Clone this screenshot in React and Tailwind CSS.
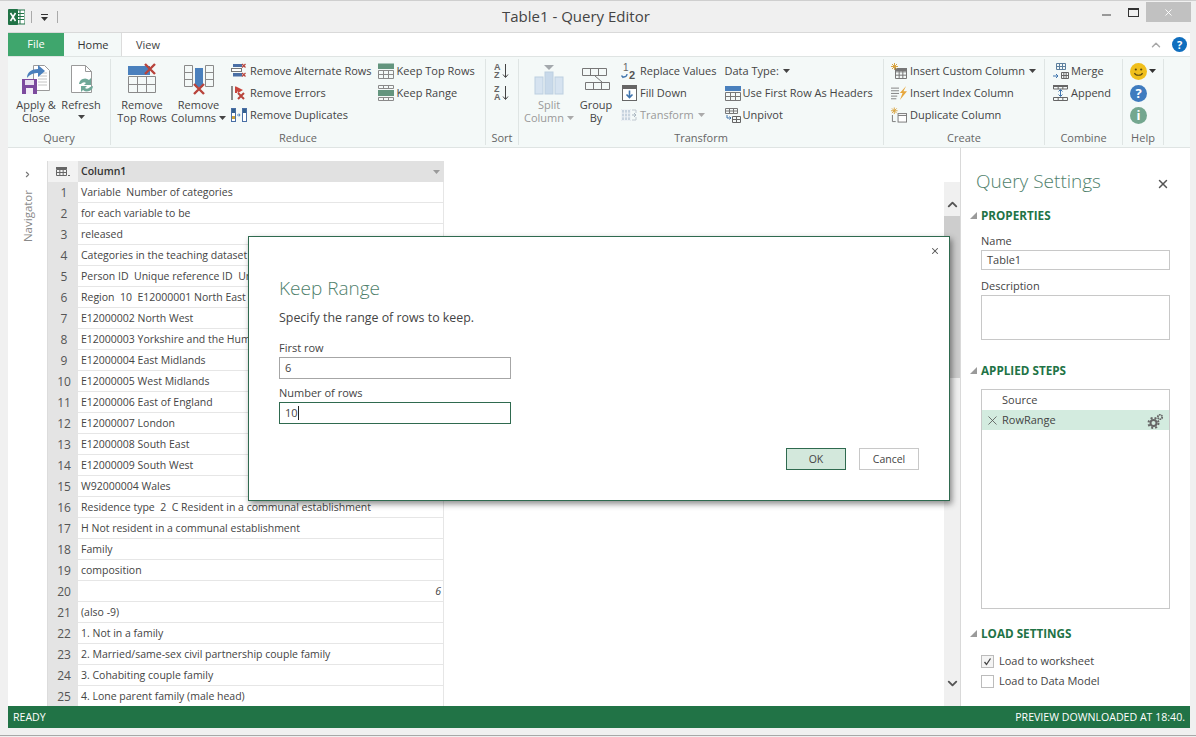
import { ChevronUp, ChevronDown, ChevronRight, X } from "lucide-react";

const rows = [
  "Variable  Number of categories",
  "for each variable to be",
  "released",
  "Categories in the teaching dataset",
  "Person ID  Unique reference ID  Unique",
  "Region  10  E12000001 North East",
  "E12000002 North West",
  "E12000003 Yorkshire and the Humber",
  "E12000004 East Midlands",
  "E12000005 West Midlands",
  "E12000006 East of England",
  "E12000007 London",
  "E12000008 South East",
  "E12000009 South West",
  "W92000004 Wales",
  "Residence type  2  C Resident in a communal establishment",
  "H Not resident in a communal establishment",
  "Family",
  "composition",
  "",
  "(also -9)",
  "1. Not in a family",
  "2. Married/same-sex civil partnership couple family",
  "3. Cohabiting couple family",
  "4. Lone parent family (male head)",
];

const Caret = ({ color = "#333" }) => (
  <svg width="7" height="4" viewBox="0 0 7 4" className="shrink-0">
    <path d="M0 0h7L3.5 4z" fill={color} />
  </svg>
);

const Grid = ({ x, y, cols, rows: r, w, h, stroke = "#8a8a8a" }) => {
  const lines = [];
  for (let i = 0; i <= cols; i++) lines.push(`M${x + (i * w) / cols} ${y}v${h}`);
  for (let i = 0; i <= r; i++) lines.push(`M${x} ${y + (i * h) / r}h${w}`);
  return <path d={lines.join("")} stroke={stroke} fill="none" strokeWidth="1" />;
};

const RedX = ({ x, y, s = 5, w = 1.6 }) => (
  <path d={`M${x} ${y}l${s} ${s}M${x + s} ${y}l${-s} ${s}`} stroke="#b8443c" strokeWidth={w} fill="none" />
);

const ApplyIcon = () => (
  <svg width="30" height="32" viewBox="0 0 30 32">
    <path d="M12.5 2.5h11l5 5v20h-16z" fill="#fff" stroke="#9a9a9a" />
    <path d="M17 10h9M17 13h9M17 16h9M17 19h9M17 22h9" stroke="#c4c4c4" />
    <path d="M6 15c0-6 5-9 11-9V2l7 6-7 6v-4c-4 0-8 1-11 5z" fill="#4a80bd" />
    <rect x="1" y="16" width="15" height="15" fill="#7c4a9e" />
    <rect x="4" y="17" width="9" height="5" fill="#e8e0ef" />
    <rect x="5" y="25" width="7" height="6" fill="#f3eef7" />
  </svg>
);

const RefreshIcon = () => (
  <svg width="30" height="32" viewBox="0 0 30 32">
    <path d="M5.5 2.5h14l6 6v21h-20z" fill="#fff" stroke="#9a9a9a" />
    <path d="M19.5 2.5v6h6" fill="none" stroke="#9a9a9a" />
    <path d="M13 21a6 6 0 0 1 10-4l2-2v7h-7l2-2a3.500 3.500 0 0 0-5 1z" fill="#6fa898" />
    <path d="M27 23a6 6 0 0 1-10 4l-2 2v-6h6l-2 2a3.500 3.500 0 0 0 5-1z" fill="#6fa898" />
  </svg>
);

const RemoveRowsIcon = () => (
  <svg width="30" height="32" viewBox="0 0 30 32">
    <rect x="1" y="3" width="22" height="9" fill="#4a80bd" />
    <Grid x={1.500} y={13.500} cols={3} rows={2} w={27} h={16} />
    <RedX x={18} y={1} s={10} w={2.4} />
  </svg>
);

const RemoveColsIcon = () => (
  <svg width="32" height="32" viewBox="0 0 32 32">
    <Grid x={1.500} y={2.500} cols={1} rows={3} w={8} h={21} />
    <Grid x={22.500} y={2.500} cols={1} rows={3} w={8} h={21} />
    <rect x="12" y="5" width="8" height="19" fill="#4a80bd" />
    <RedX x={11} y={21} s={10} w={2.4} />
  </svg>
);

const SplitIcon = () => (
  <svg width="30" height="30" viewBox="0 0 30 30">
    <path d="M10 0h10l-5 5z" fill="#a4a9ad" />
    <rect x="1" y="12" width="8" height="17" fill="#d6e3f0" stroke="#bccfe0" />
    <rect x="11" y="7" width="8" height="22" fill="#c8d9ea" stroke="#bccfe0" />
    <rect x="21" y="12" width="8" height="17" fill="#d6e3f0" stroke="#bccfe0" />
  </svg>
);

const GroupByIcon = () => (
  <svg width="30" height="30" viewBox="0 0 30 30">
    <Grid x={1.500} y={3.500} cols={3} rows={1} w={24} h={7} stroke="#777" />
    <Grid x={4.500} y={17.500} cols={3} rows={1} w={24} h={7} stroke="#777" />
    <path d="M14 11l7 6" stroke="#777" />
  </svg>
);

const AltRowsIcon = () => (
  <svg width="16" height="16" viewBox="0 0 16 16">
    <rect x="2" y="1" width="9" height="3" fill="#4a6fa5" />
    <rect x="0.500" y="5.500" width="10" height="3" fill="#fff" stroke="#777" />
    <rect x="2" y="10" width="9" height="3.500" fill="#4a6fa5" />
    <RedX x={11} y={1} s={3.500} w={1.200} />
    <RedX x={11} y={10} s={3.500} w={1.200} />
  </svg>
);

const ErrorsIcon = () => (
  <svg width="16" height="16" viewBox="0 0 16 16">
    <path d="M1 1v14" stroke="#666" strokeWidth="1.500" />
    <path d="M4 1l8 4-5 3z" fill="#c8453c" />
    <path d="M5 2v6" stroke="#c8453c" strokeWidth="2" />
    <RedX x={7} y={8} s={6} w={2} />
  </svg>
);

const DupIcon = () => (
  <svg width="16" height="16" viewBox="0 0 16 16">
    <rect x="0.500" y="1.500" width="4" height="13" fill="#fff" stroke="#4a6fa5" />
    <rect x="1" y="2" width="3" height="4" fill="#34618f" />
    <rect x="1" y="9" width="3" height="3" fill="#c8a03c" />
    <rect x="11.500" y="1.500" width="4" height="13" fill="#fff" stroke="#4a6fa5" />
    <rect x="12" y="2" width="3" height="4" fill="#34618f" />
    <path d="M6 8h3l-1-1.500M9 8l-1 1.500" stroke="#4a80bd" fill="none" />
  </svg>
);

const KeepTopIcon = () => (
  <svg width="16" height="16" viewBox="0 0 16 16">
    <rect x="0" y="0.500" width="16" height="5.500" fill="#63957e" />
    <Grid x={0.500} y={7.500} cols={3} rows={2} w={15} h={8} stroke="#8a8a8a" />
  </svg>
);

const KeepRangeIcon = () => (
  <svg width="16" height="16" viewBox="0 0 16 16">
    <Grid x={0.500} y={0.500} cols={3} rows={1} w={15} h={3} stroke="#8a8a8a" />
    <rect x="0" y="5" width="16" height="6" fill="#63957e" />
    <Grid x={0.500} y={12.500} cols={3} rows={1} w={15} h={3} stroke="#8a8a8a" />
  </svg>
);

const SortIcon = ({ top, bottom }) => (
  <svg width="16" height="18" viewBox="0 0 16 18">
    <text x="0" y="8" fontSize="9" fontWeight="700" fill="#666" fontFamily="Liberation Sans, sans-serif">{top}</text>
    <text x="0" y="16" fontSize="9" fontWeight="700" fill="#666" fontFamily="Liberation Sans, sans-serif">{bottom}</text>
    <path d="M11.500 2v13M9 12.500l2.500 3 2.500-3" stroke="#444" fill="none" />
  </svg>
);

const ReplaceIcon = () => (
  <svg width="16" height="18" viewBox="0 0 16 18">
    <text x="2" y="9" fontSize="10" fill="#666" fontFamily="Liberation Sans, sans-serif">1</text>
    <text x="8" y="17" fontSize="11" fontWeight="700" fill="#555" fontFamily="Liberation Sans, sans-serif">2</text>
    <path d="M6 12c0 2-2 3-4 3M0.500 13.500L2 15.500l2-1" stroke="#3f74ad" fill="none" strokeWidth="1.300" />
  </svg>
);

const FillDownIcon = () => (
  <svg width="15" height="16" viewBox="0 0 15 16">
    <rect x="0.500" y="0.500" width="14" height="15" fill="#fff" stroke="#666" />
    <rect x="0" y="0" width="15" height="4" fill="#666" />
    <path d="M7.500 5.500v7M4.500 9.500l3 3 3-3" stroke="#3f74ad" strokeWidth="1.600" fill="none" />
  </svg>
);

const TransformIcon = () => (
  <svg width="16" height="14" viewBox="0 0 16 14">
    <rect x="0" y="1" width="10" height="12" fill="#c7d3de" />
    <Grid x={0.500} y={1.500} cols={3} rows={3} w={9} h={11} stroke="#eef2f5" />
    <path d="M11 7h3M13 5l2 2-2 2" stroke="#a9b5bf" fill="none" />
    <path d="M11 2h4v3M11 12h4V9" stroke="#c0c8cf" fill="none" />
  </svg>
);

const FirstRowIcon = () => (
  <svg width="16" height="15" viewBox="0 0 16 15">
    <rect x="0" y="0" width="16" height="5" fill="#4a80bd" />
    <Grid x={0.500} y={6.500} cols={3} rows={2} w={15} h={8} stroke="#777" />
  </svg>
);

const UnpivotIcon = () => (
  <svg width="16" height="15" viewBox="0 0 16 15">
    <Grid x={0.500} y={0.500} cols={3} rows={2} w={12} h={5} stroke="#777" />
    <Grid x={7.500} y={8.500} cols={2} rows={2} w={8} h={6} stroke="#666" />
    <path d="M2 7v3h4M4.500 8.500L6 10l-1.500 1.500" stroke="#3f74ad" fill="none" />
  </svg>
);

const CustomColIcon = () => (
  <svg width="16" height="16" viewBox="0 0 16 16">
    <Grid x={4.500} y={5.500} cols={3} rows={3} w={11} h={10} stroke="#777" />
    <rect x="4" y="5" width="12" height="3" fill="#777" />
    <path d="M3.500 0v7M0 3.500h7M1 1l5 5M6 1L1 6" stroke="#d9a441" />
  </svg>
);

const IndexColIcon = () => (
  <svg width="18" height="16" viewBox="0 0 18 16">
    <path d="M0 2.500h9M0 5.500h9M0 8.500h9M0 11.500h7M0 14.500h6" stroke="#777" />
    <path d="M17 0l-7 8h3l-3 8 8-10h-4z" fill="#e7a73c" />
  </svg>
);

const DupColIcon = () => (
  <svg width="17" height="16" viewBox="0 0 17 16">
    <path d="M3.500 0v7M0 3.500h7M1 1l5 5M6 1L1 6" stroke="#d9a441" />
    <path d="M1.500 8v7H5" stroke="#777" fill="none" />
    <rect x="7.500" y="6.500" width="9" height="9" fill="#fff" stroke="#777" />
    <path d="M7.500 8.500h9" stroke="#777" />
  </svg>
);

const MergeIcon = () => (
  <svg width="16" height="16" viewBox="0 0 16 16">
    <Grid x={3.500} y={0.500} cols={3} rows={2} w={9} h={6} stroke="#5d7f9e" />
    <Grid x={8.500} y={9.500} cols={3} rows={2} w={7} h={6} stroke="#666" />
    <path d="M0 13h5M3 11l2 2-2 2" stroke="#3f74ad" fill="none" />
  </svg>
);

const AppendIcon = () => (
  <svg width="16" height="16" viewBox="0 0 16 16">
    <Grid x={0.500} y={0.500} cols={3} rows={1} w={14} h={3.500} stroke="#666" />
    <path d="M0 1h15" stroke="#666" strokeWidth="2" />
    <path d="M7.500 5v6M5.500 6.500l2-2 2 2M5.500 9.500l2 2 2-2" stroke="#3f74ad" fill="none" />
    <Grid x={0.500} y={12.500} cols={3} rows={1} w={14} h={3} stroke="#666" />
  </svg>
);

const Smiley = () => (
  <svg width="17" height="17" viewBox="0 0 17 17">
    <circle cx="8.500" cy="8.500" r="8.500" fill="#f0bf1c" />
    <circle cx="5.800" cy="6.500" r="1.100" fill="#5b4a12" />
    <circle cx="11.200" cy="6.500" r="1.100" fill="#5b4a12" />
    <path d="M4.500 10c1 3 7 3 8 0" stroke="#5b4a12" fill="none" strokeWidth="1.100" />
  </svg>
);

const Round = ({ color, size = 16, children }) => (
  <div
    className="flex items-center justify-center rounded-full text-white font-bold leading-none"
    style={{ background: color, width: size, height: size, fontSize: size - 4 }}
  >
    {children}
  </div>
);

const LargeBtn = ({ icon, lines, width, disabled, caret, caretBelow }) => (
  <div className="flex flex-col items-center" style={{ width }}>
    <div className="flex h-[35px] items-end justify-center">{icon}</div>
    <div className={`mt-[3px] text-center leading-[13px] ${disabled ? "text-[#9a9a9a]" : "text-[#444]"}`}>
      {lines.map((l, i) => (
        <div key={i} className="flex items-center justify-center gap-[3px] whitespace-nowrap">
          {l}
          {caret && i === lines.length - 1 && <Caret color={disabled ? "#aaa" : "#444"} />}
        </div>
      ))}
      {caretBelow && (
        <div className="flex justify-center pt-[4px]">
          <Caret color="#444" />
        </div>
      )}
    </div>
  </div>
);

const SmallBtn = ({ icon, label, disabled, caret, gap = "gap-[3px]" }) => (
  <div className={`flex h-[22px] items-center whitespace-nowrap ${gap} ${disabled ? "text-[#9a9a9a]" : "text-[#444]"}`}>
    {icon && <div className="flex w-[16px] shrink-0 items-center justify-center">{icon}</div>}
    <span>{label}</span>
    {caret && <span className="ml-[1px]"><Caret color={disabled ? "#aaa" : "#444"} /></span>}
  </div>
);

const Group = ({ label, width, children }) => (
  <div className="flex h-full shrink-0 flex-col border-r border-[#dfe5e4]" style={{ width }}>
    <div className="flex min-h-0 flex-1 items-start">{children}</div>
    <div className="h-[15px] text-center leading-[15px] text-[#666]">{label}</div>
  </div>
);

const Section = ({ title, className = "" }) => (
  <div className={`flex items-center gap-[4px] pl-[9px] ${className}`}>
    <svg width="7" height="7" viewBox="0 0 7 7" className="shrink-0">
      <path d="M7 0v7H0z" fill="#9a9a9a" />
    </svg>
    <span className="text-[11.7px] font-bold leading-[16px] text-[#217346]">{title}</span>
  </div>
);

export default function App() {
  return (
    <div className="relative flex h-[737px] w-[1196px] flex-col overflow-hidden border-t border-[#cfcfcf] bg-[#f0f0f0] text-[11px] text-[#444] font-['Open_Sans','Noto_Sans',sans-serif]">
      {/* title bar */}
      <div className="relative flex h-[31px] shrink-0 items-center pl-[8px]">
        <svg width="17" height="16" viewBox="0 0 17 16" className="shrink-0">
          <rect x="7" y="1" width="10" height="14" fill="#fff" stroke="#217346" />
          <path d="M8 4.500h8M8 7.500h8M8 10.500h8M12 1v14" stroke="#217346" />
          <rect x="0" y="0" width="10" height="16" rx="1" fill="#217346" />
          <path d="M2.500 4l5 8M7.500 4l-5 8" stroke="#fff" strokeWidth="1.600" />
        </svg>
        <div className="ml-[6px] h-[12px] w-px bg-[#aaa]" />
        <div className="ml-[9px] flex flex-col items-center gap-[2px] pt-[2px]">
          <div className="h-px w-[7px] bg-[#333]" />
          <Caret color="#333" />
        </div>
        <div className="ml-[9px] h-[12px] w-px bg-[#aaa]" />
        <div className="absolute left-[502px] top-[4px] text-[15px] leading-[22px] text-[#444]">Table1 - Query Editor</div>
        <div className="ml-auto mr-[5px] flex items-start self-start">
          <div className="mt-[13px] h-[2px] w-[9px] bg-[#999]" />
          <div className="ml-[17px] mt-[7px] h-[9px] w-[11px] border border-t-2 border-[#333]" />
          <div className="ml-[7px] mt-[1px] flex h-[20px] w-[45px] items-center justify-center bg-[#c1c1c1]">
            <X size={11} strokeWidth={2} color="#fff" />
          </div>
        </div>
      </div>

      <div className="ml-[8px] mr-[6px] flex min-h-0 flex-1 flex-col">
        {/* tabs */}
        <div className="flex h-[24px] shrink-0 items-stretch border-t border-[#d9d9d9] bg-white">
          <div className="flex w-[56px] items-center justify-center bg-[#3fa66d] text-white">File</div>
          <div className="-mb-px flex w-[58px] items-center justify-center border-r border-[#dcdcdc] bg-[#f4f9f8] pl-[1px] pt-[1px] text-[#333]">Home</div>
          <div className="ml-[14px] flex items-center pt-[1px] text-[#444]">View</div>
          <div className="ml-auto mr-[3px] flex items-center gap-[9px]">
            <ChevronUp size={14} strokeWidth={2.500} color="#a8a8a8" />
            <Round color="#106ebe" size={15}>?</Round>
          </div>
        </div>

        {/* ribbon */}
        <div className="flex h-[92px] shrink-0 items-stretch border-y border-[#dfe4e3] bg-[#f4f9f8] pb-[2px] pt-[2px]">
          <Group label="Query" width={103}>
            <div className="flex pl-[2px] pt-[1px]">
              <LargeBtn width={52} icon={<ApplyIcon />} lines={["Apply &", "Close"]} />
              <LargeBtn width={38} icon={<RefreshIcon />} lines={["Refresh"]} caretBelow />
            </div>
          </Group>
          <Group label="Reduce" width={375}>
            <div className="flex pl-[2px] pt-[1px]">
              <LargeBtn width={58} icon={<RemoveRowsIcon />} lines={["Remove", "Top Rows"]} />
              <LargeBtn width={55} icon={<RemoveColsIcon />} lines={["Remove", "Columns"]} caret />
              <div className="ml-[5px] flex flex-col">
                <SmallBtn icon={<AltRowsIcon />} label="Remove Alternate Rows" />
                <SmallBtn icon={<ErrorsIcon />} label="Remove Errors" />
                <SmallBtn icon={<DupIcon />} label="Remove Duplicates" />
              </div>
              <div className="ml-[6px] flex flex-col">
                <SmallBtn icon={<KeepTopIcon />} label="Keep Top Rows" />
                <SmallBtn icon={<KeepRangeIcon />} label="Keep Range" />
              </div>
            </div>
          </Group>
          <Group label="Sort" width={33}>
            <div className="flex flex-col items-center gap-[4px] pl-[8px] pt-[3px]">
              <SortIcon top="A" bottom="Z" />
              <SortIcon top="Z" bottom="A" />
            </div>
          </Group>
          <Group label="Transform" width={365}>
            <div className="flex pt-[1px]">
              <LargeBtn width={60} disabled icon={<SplitIcon />} lines={["Split", "Column"]} caret />
              <LargeBtn width={34} icon={<GroupByIcon />} lines={["Group", "By"]} />
              <div className="ml-[8px] flex flex-col">
                <SmallBtn icon={<ReplaceIcon />} label="Replace Values" />
                <SmallBtn icon={<FillDownIcon />} label="Fill Down" />
                <SmallBtn icon={<TransformIcon />} label="Transform" disabled caret />
              </div>
              <div className="ml-[8px] flex flex-col">
                <SmallBtn label="Data Type:" caret />
                <SmallBtn icon={<FirstRowIcon />} label="Use First Row As Headers" gap="gap-[2px]" />
                <SmallBtn icon={<UnpivotIcon />} label="Unpivot" gap="gap-[2px]" />
              </div>
            </div>
          </Group>
          <Group label="Create" width={161}>
            <div className="flex flex-col pl-[7px] pt-[1px]">
              <SmallBtn icon={<CustomColIcon />} label="Insert Custom Column" caret />
              <SmallBtn icon={<IndexColIcon />} label="Insert Index Column" />
              <SmallBtn icon={<DupColIcon />} label="Duplicate Column" />
            </div>
          </Group>
          <Group label="Combine" width={78}>
            <div className="flex flex-col pl-[8px] pt-[1px]">
              <SmallBtn icon={<MergeIcon />} label="Merge" gap="gap-[2px]" />
              <SmallBtn icon={<AppendIcon />} label="Append" gap="gap-[2px]" />
            </div>
          </Group>
          <Group label="Help" width={41}>
            <div className="flex flex-col pl-[7px] pt-[1px]">
              <div className="flex h-[22px] items-center gap-[2px]">
                <Smiley />
                <Caret color="#333" />
              </div>
              <div className="flex h-[22px] items-center"><Round color="#3f7cbf" size={17}>?</Round></div>
              <div className="flex h-[22px] items-center"><Round color="#74a78f" size={17}>i</Round></div>
            </div>
          </Group>
        </div>

        {/* main area */}
        <div className="flex min-h-0 flex-1 bg-white">
          <div className="flex w-[39px] shrink-0 flex-col items-center pt-[22px] text-[#8a8a8a]">
            <ChevronRight size={9} strokeWidth={3} color="#777" />
            <div className="mt-[11px] rotate-180 text-[11.5px] leading-none [writing-mode:vertical-rl]">Navigator</div>
          </div>

          <div className="w-[397px] shrink-0 overflow-hidden pt-[13px] text-[10.5px]">
            <div className="flex h-[21px] border-l border-[#dcdcdc]">
              <div className="flex w-[30px] shrink-0 items-center justify-center gap-[1px] bg-[#f2f2f2]">
                <svg width="11" height="9" viewBox="0 0 11 9">
                  <path d="M0 0h11v2H0z" fill="#666" />
                  <Grid x={0.500} y={2.500} cols={3} rows={2} w={10} h={6} stroke="#666" />
                </svg>
                <div className="mt-[7px] h-px w-[2px] bg-[#666]" />
              </div>
              <div className="flex flex-1 items-center justify-between bg-[#e1e1e1] pl-[3px] pr-[4px] font-semibold text-[#333]">
                Column1
                <Caret color="#9a9a9a" />
              </div>
            </div>
            {rows.map((text, i) => (
              <div key={i} className="flex h-[21px] border-l border-[#dcdcdc]">
                <div className="flex w-[30px] shrink-0 items-center justify-center bg-[#e4e4e4] pl-[2px] text-[12px] text-[#555]">{i + 1}</div>
                <div className="flex flex-1 items-center justify-between whitespace-pre border-b border-r border-[#e6e6e6] pl-[3px] pr-[2px] pt-[1px] text-[#444]">
                  {text}
                  {i === 19 && <span className="ml-auto italic">6</span>}
                </div>
              </div>
            ))}
          </div>

          <div className="flex-1" />

          {/* scroll bar */}
          <div className="mt-[34px] flex w-[16px] shrink-0 flex-col items-center justify-between bg-[#f0f0f0]">
            <div className="flex w-full flex-col items-center">
              <div className="flex h-[34px] items-end pb-[4px]"><ChevronUp size={15} strokeWidth={3} color="#555" /></div>
              <div className="h-[162px] w-full bg-[#cdcdcd]" />
            </div>
            <ChevronDown size={15} strokeWidth={3} color="#555" className="mb-[15px]" />
          </div>

          {/* query settings */}
          <div className="w-[230px] shrink-0 border-l border-[#d9d9d9]">
            <div className="flex h-[46px] items-end justify-between pl-[15px] pr-[20px]">
              <span className="text-[19px] font-light leading-[26px] text-[#4f7f6c]">Query Settings</span>
              <X size={14} strokeWidth={2.500} color="#555" className="mb-[3px]" />
            </div>
            <Section title="PROPERTIES" className="mt-[13px]" />
            <div className="px-[20px]">
              <div className="mt-[10px] leading-[15px]">Name</div>
              <div className="mt-[2px] flex h-[20px] items-center border border-[#c8c8c8] pl-[5px] pt-[1px]">Table1</div>
              <div className="mt-[8px] leading-[15px]">Description</div>
              <div className="mt-[2px] h-[45px] border border-[#c8c8c8]" />
            </div>
            <Section title="APPLIED STEPS" className="mt-[22px]" />
            <div className="mx-[20px] mt-[11px] h-[220px] border border-[#c8c8c8]">
              <div className="flex h-[20px] items-center pl-[20px]">Source</div>
              <div className="flex h-[20px] items-center justify-between bg-[#d3ebdf] pr-[5px] pt-[1px]">
                <div className="flex items-center gap-[2px] pl-[3px]">
                  <X size={15} strokeWidth={1.300} color="#555" />
                  <span>RowRange</span>
                </div>
                <svg width="17" height="16" viewBox="0 0 17 16">
                  <circle cx="6.500" cy="10" r="3" fill="none" stroke="#666" strokeWidth="2" />
                  <circle cx="6.500" cy="10" r="5" fill="none" stroke="#666" strokeWidth="2" strokeDasharray="2 2" />
                  <circle cx="13" cy="4" r="2.200" fill="none" stroke="#666" strokeWidth="1.800" strokeDasharray="1.500 0.600" />
                </svg>
              </div>
            </div>
            <Section title="LOAD SETTINGS" className="mt-[16px]" />
            <div className="mt-[10px] flex h-[20px] items-center gap-[5px] pl-[20px]">
              <div className="flex h-[13px] w-[13px] items-center justify-center border border-[#bcbcbc] bg-[#f4f4f4]">
                <svg width="9" height="9" viewBox="0 0 9 9">
                  <path d="M1.500 5l2 2.500 4-6" stroke="#444" strokeWidth="1.300" fill="none" />
                </svg>
              </div>
              Load to worksheet
            </div>
            <div className="flex h-[20px] items-center gap-[5px] pl-[20px]">
              <div className="h-[13px] w-[13px] border border-[#bcbcbc]" />
              Load to Data Model
            </div>
          </div>
        </div>

        {/* status bar */}
        <div className="flex h-[22px] shrink-0 items-center justify-between bg-[#217346] px-[5px] pt-[1px] text-[10.6px] text-white">
          <span>READY</span>
          <span>PREVIEW DOWNLOADED AT 18:40.</span>
        </div>
      </div>
      <div className="mb-[1px] h-[8px] shrink-0 border-b border-[#a8a8a8]" />

      {/* keep range dialog */}
      <div className="absolute left-[248px] top-[235px] h-[265px] w-[702px] border border-[#2f6a4f] bg-white px-[30px] shadow-[2px_3px_6px_rgba(0,0,0,0.45)]">
        <X size={10} strokeWidth={2.500} color="#555" className="absolute right-[9px] top-[9px]" />
        <div className="mt-[38px] text-[19px] font-light leading-[26px] text-[#4f7f6c]">Keep Range</div>
        <div className="mt-[8px] text-[12.4px] leading-[18px] text-[#444]">Specify the range of rows to keep.</div>
        <div className="mt-[13px] leading-[15px]">First row</div>
        <div className="mt-[2px] flex h-[22px] w-[232px] items-center border border-[#a6a6a6] pl-[5px]">6</div>
        <div className="mt-[6px] leading-[15px]">Number of rows</div>
        <div className="mt-[2px] flex h-[22px] w-[232px] items-center border border-[#2f6a4f] pl-[5px]">
          10<span className="h-[14px] w-px bg-[#222]" />
        </div>
        <div className="mt-[24px] flex justify-end gap-[13px] text-[10.5px]">
          <div className="flex h-[22px] w-[60px] items-center justify-center border border-[#2f6a4f] bg-[#d3e8dc] pt-[1px]">OK</div>
          <div className="flex h-[22px] w-[60px] items-center justify-center border border-[#c8c8c8] pt-[1px]">Cancel</div>
        </div>
      </div>
    </div>
  );
}
